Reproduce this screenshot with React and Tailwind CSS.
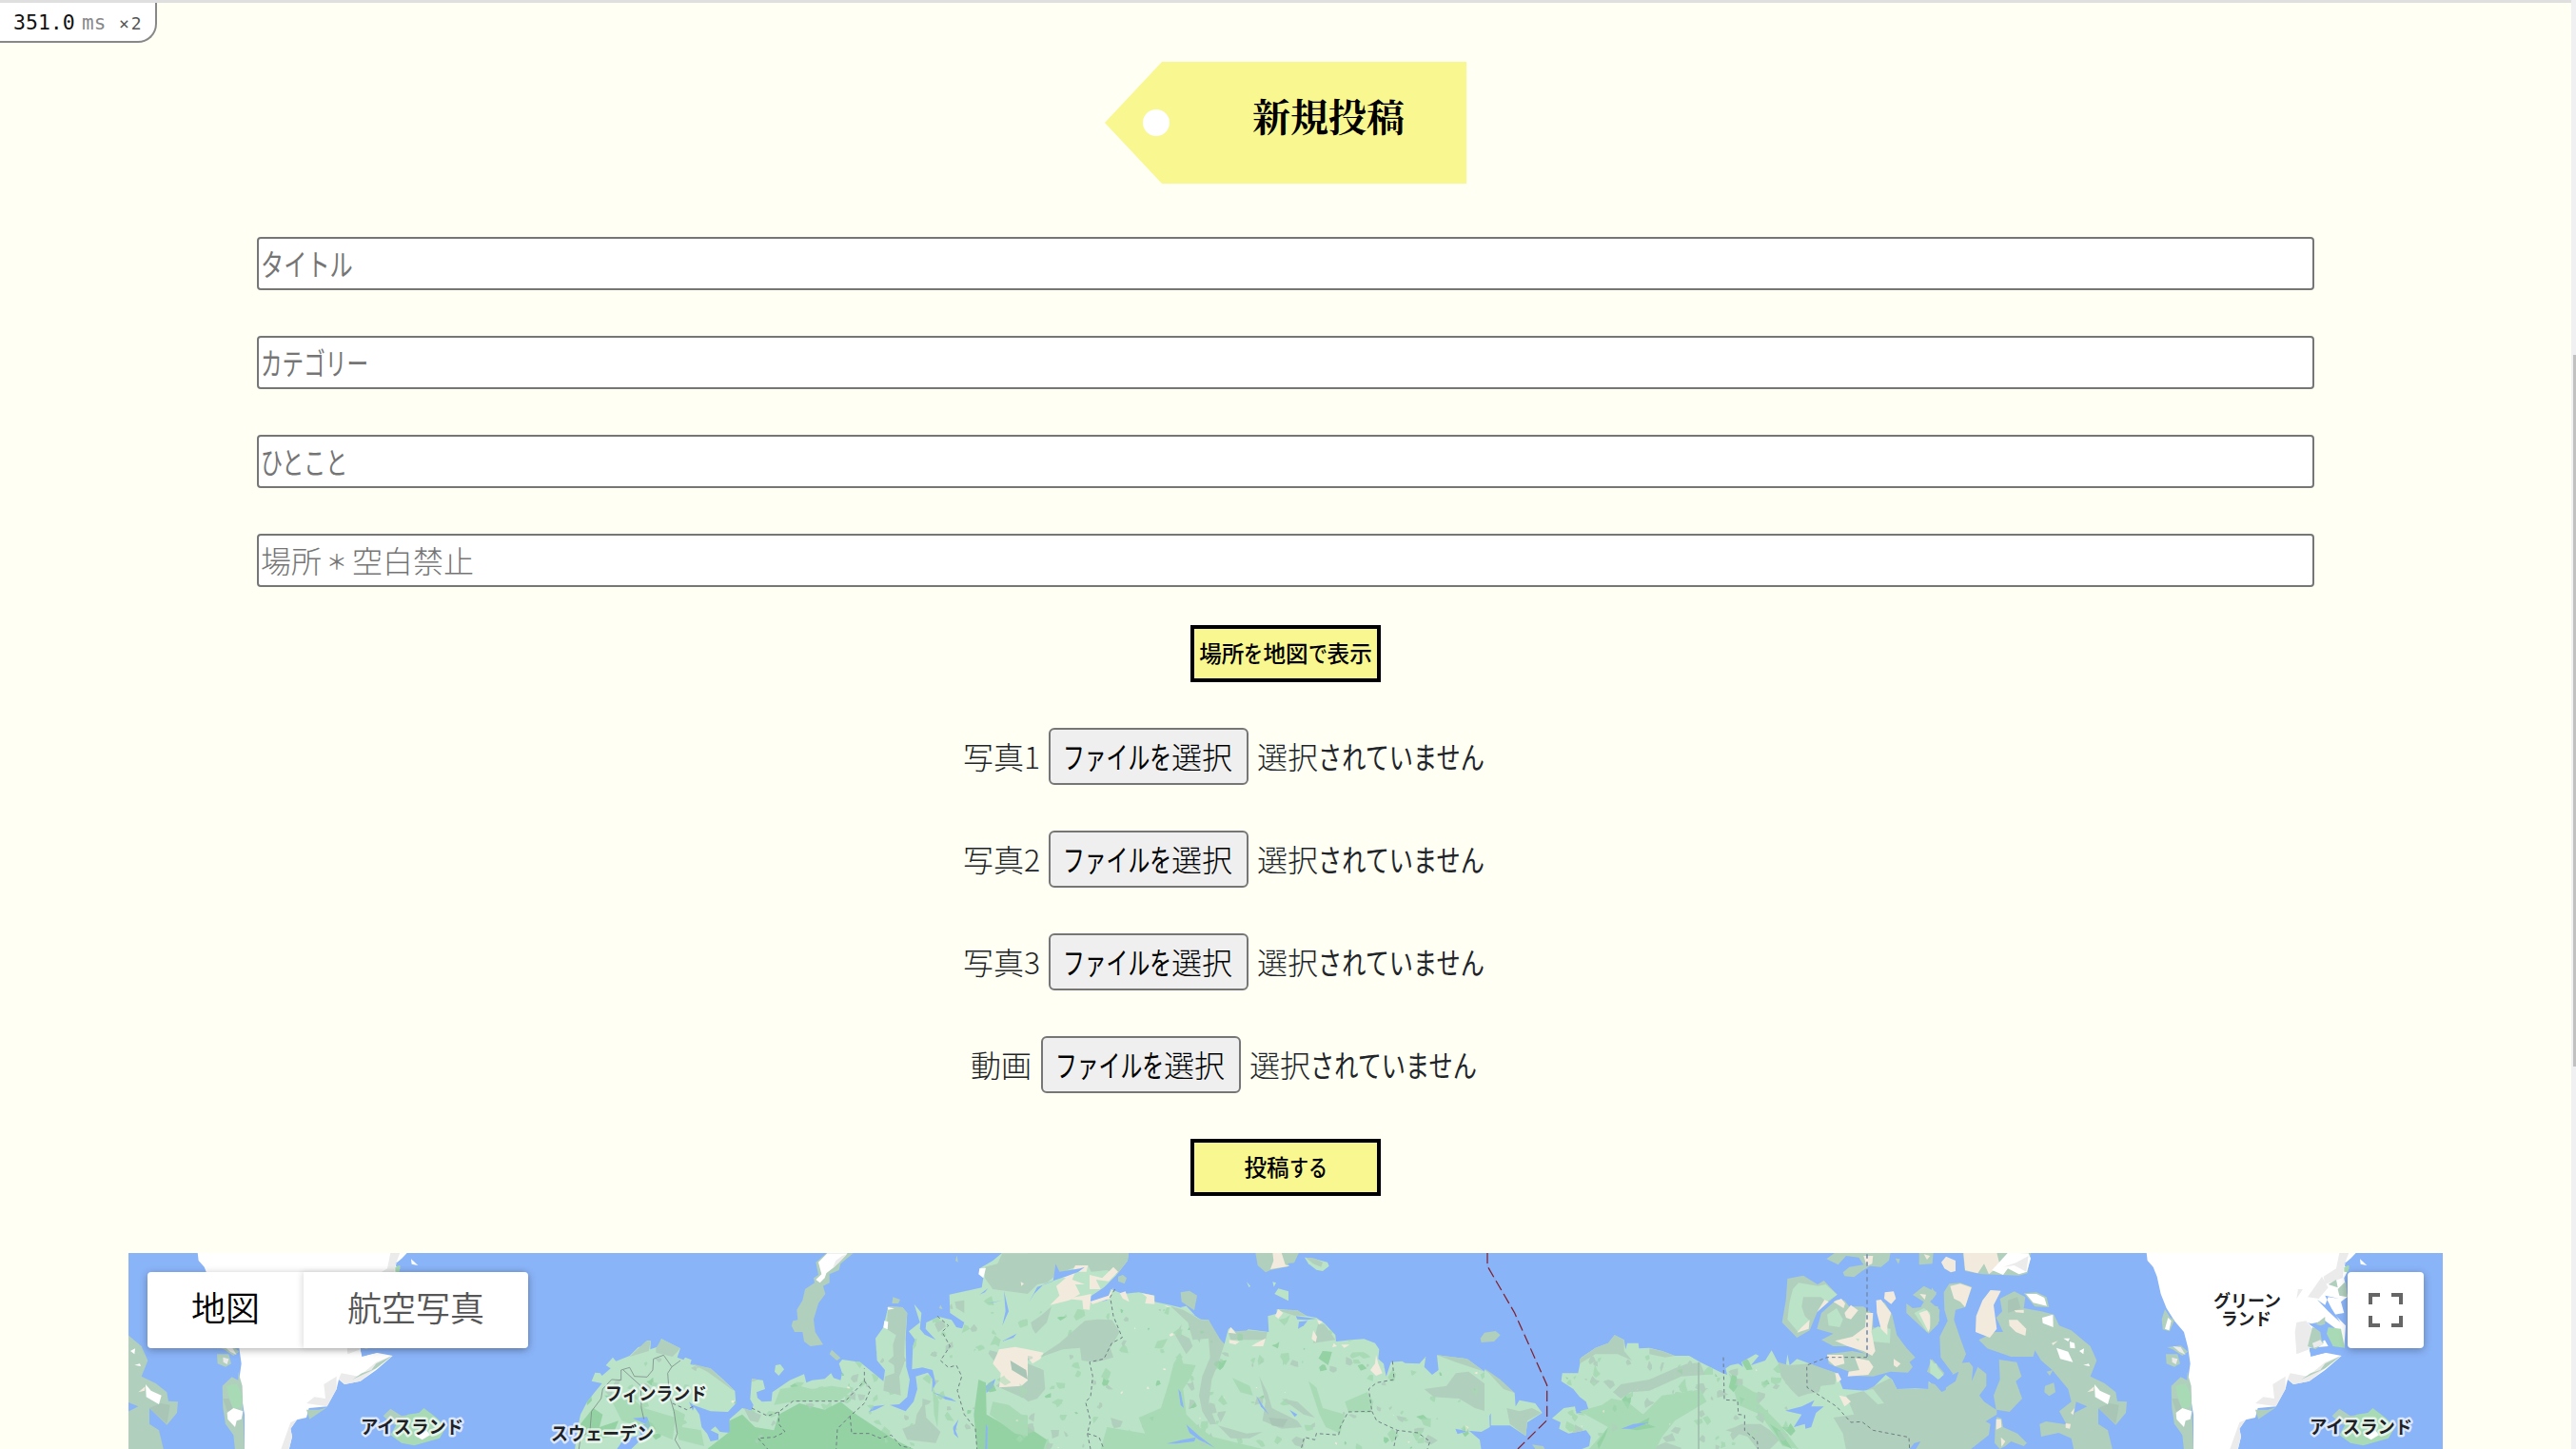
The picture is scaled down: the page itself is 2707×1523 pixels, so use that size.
import React from "react";

const KANA = /[\u3041-\u30ff]/;

// Kana runs are set narrower than kanji; `kana` is the advance of one kana in pixels.
function Text({ children, size, kana, className = "", kanaClass = "" }) {
  const runs = [];
  for (const ch of children) {
    const k = KANA.test(ch);
    const last = runs[runs.length - 1];
    if (ch !== "＊" && last && last.k === k && last.t !== "＊") last.t += ch;
    else runs.push({ k, t: ch });
  }
  return (
    <span className={"flex whitespace-nowrap " + className}>
      {runs.map((r, i) =>
        r.k ? (
          <span key={i} className={"block " + kanaClass} style={{ width: r.t.length * kana }}>
            <span className="block w-max origin-left" style={{ transform: `scaleX(${kana / size})` }}>
              {r.t}
            </span>
          </span>
        ) : (
          <span key={i} className={r.t === "＊" ? "block scale-[0.68] font-normal" : "block"}>{r.t}</span>
        )
      )}
    </span>
  );
}

const C = {
  land: "#bbe3c8",
  gray: "#b1cfbd",
  dark: "#a9c5b5",
  mid: "#a8dab5",
  forest: "#94d2a5",
  tan: "#f2ebdd",
  white: "#ffffff",
  ice: "#ebebec",
  sea: "#8ab4f8",
};

const WEST = [
  ["land", "12,672 22,600 30,560 50,522 75,490 98,462 65,455 76,428 92,430 98,438 125,415 110,405 132,380 142,392 185,375 212,348 240,342 238,328 252,328 250,355 278,345 285,322 345,352 335,380 355,388 360,380 380,388 376,402 440,415 480,450 517,486 520,525 495,552 440,550 385,530 405,560 412,600 430,622 440,645 465,640 465,622 440,610 455,598 470,615 502,618 500,575 540,540 570,548 575,530 565,512 570,448 605,452 612,480 585,490 588,508 602,520 632,518 635,490 690,452 735,433 742,460 760,452 800,448 820,430 828,445 850,452 855,430 845,400 855,387 912,395 985,455 990,420 965,390 960,320 985,285 1000,220 1045,222 1060,240 1055,320 1057,410 1068,450 1060,505 1035,528 1005,530 1055,550 1080,520 1092,480 1087,440 1125,428 1140,450 1138,490 1150,462 1140,420 1108,412 1075,418 1078,345 1085,325 1065,298 1100,270 1082,212 1105,240 1100,290 1115,308 1150,325 1118,290 1120,270 1160,252 1200,262 1215,285 1240,290 1235,330 1240,372 1218,352 1225,312 1240,270 1195,240 1193,182 1295,160 1300,130 1288,100 1330,75 1360,50 1500,50 1500,672"],
  ["forest", "430,669 500,615 500,580 540,560 580,600 640,610 655,560 720,525 800,545 850,520 900,560 960,600 1020,640 1080,669"],
  ["forest", "30,590 70,540 100,560 90,600 150,580 130,630 60,640"],
  ["mid", "130,520 180,500 230,540 330,570 320,640 250,610 160,580"],
  ["mid", "320,540 360,560 350,600 410,610 420,660 340,640"],
  ["mid", "640,530 660,480 720,470 760,480 820,470 890,480 850,515 700,520"],
  ["mid", "1140,470 1160,520 1155,600 1145,560"],
  ["forest", "1270,560 1285,450 1308,460 1310,560 1380,600 1400,580 1500,610 1500,669 1280,669"],
  ["mid", "1320,560 1330,520 1380,530 1420,560 1500,570 1500,640 1400,620"],
  ["gray", "235,330 252,328 245,360 185,378"],
  ["gray", "268,352 285,322 345,352 320,378 268,365"],
  ["gray", "380,400 440,415 517,486 505,480 430,425"],
  ["gray", "995,290 1000,220 1045,222 1060,240 1052,330 1050,400 1035,440 1040,500 985,485 990,440 1020,430 1015,340 1025,310"],
  ["gray", "545,540 600,562 590,585 565,580"],
  ["gray", "1045,605 1085,590 1090,560 1115,520 1120,570 1165,615 1150,650 1060,640"],
  ["gray", "1360,52 1500,52 1500,160 1440,180 1330,165 1305,130 1305,95 1345,85"],
  ["gray", "1210,205 1240,200 1240,240 1215,225"],
  ["gray", "1450,265 1485,248 1500,250 1500,320 1460,300"],
  ["gray", "1340,470 1390,430 1460,390 1500,360 1500,570 1430,510"],
  ["tan", "1330,400 1350,355 1400,347 1480,362 1475,395 1440,395 1455,440 1420,470 1350,475 1355,430"],
  ["dark", "1385,390 1435,420 1440,450 1390,420"],
  ["white", "1288,100 1308,98 1300,130 1285,118"],
  ["white", "998,222 1020,226 1000,230"],
  ["white", "988,265 1000,268 998,292 985,286"],
  ["tan", "1418,142 1428,148 1420,155"],
  ["gray", "805,52 890,52 850,85 845,105 815,118 815,145 795,155 802,180 780,210 765,260 770,300 795,340 755,345 735,330 730,300 705,300 695,280 700,265 715,262 712,230 730,200 738,165 768,145 765,130 780,120 772,80"],
  ["white", "808,52 872,52 830,95 805,115 800,130 785,145 772,135 790,118 780,80"],
  ["ice", "855,60 870,55 845,82 825,98 835,75"],
  ["land", "645,405 660,402 672,418 655,438 642,425"],
  ["gray", "822,356 850,382 838,390 815,370"],
  ["gray", "1015,190 1038,198 1032,210 1012,210"],
  ["gray", "1217,58 1220,80 1212,75"],
  ["gray", "1165,215 1172,228 1160,225"],
  ["sea", "145,669 165,640 220,625 210,600 235,590 195,572 240,568 250,595 215,645 190,669"],
  ["sea", "372,520 390,535 384,548"],
  ["sea", "1310,210 1360,200 1330,208"],
  ["sea", "1365,170 1380,235 1360,280 1370,235"],
  ["sea", "1358,330 1405,305 1395,318"],
  ["sea", "1288,182 1315,162 1305,175"],
  ["sea", "1308,470 1338,448 1330,475 1310,492"],
  ["sea", "1308,590 1313,600 1312,669 1306,669"],
  ["sea", "1140,490 1200,510 1215,520 1180,512"],
  ["sea", "1205,600 1222,575 1212,610 1222,635 1208,622"],
  ["sea", "940,552 950,535 990,530 960,545"],
];

const CENTRE = [
  ["land", "0,50 318,50 315,75 280,120 240,160 195,190 200,210 250,200 262,165 300,180 350,175 400,185 400,205 450,215 490,225 545,260 570,262 600,320 620,338 632,292 640,285 662,305 680,305 695,292 760,300 757,250 785,242 785,228 850,232 880,250 910,255 935,272 970,310 972,330 1020,325 1060,322 1095,335 1108,355 1105,385 1122,400 1130,440 1145,395 1180,392 1190,398 1235,400 1255,377 1250,410 1275,435 1295,420 1290,373 1385,385 1440,425 1502,462 1502,582 1475,580 1470,555 1455,558 1457,600 1430,615 1370,610 1348,605 1355,622 1392,612 1425,640 1430,672 0,672"],
  ["gray", "0,50 318,50 315,75 280,120 250,105 200,110 190,90 150,95 90,120 60,145 30,150 0,180"],
  ["gray", "25,385 100,335 180,265 220,260 265,262 290,300 260,350 270,380 215,395 170,390 165,350 110,355"],
  ["gray", "15,290 10,270 40,250 75,220 60,270 25,305"],
  ["gray", "0,400 50,420 55,480 30,510 0,520"],
  ["gray", "450,218 490,230 545,262 570,262 605,320 620,338 600,400 580,450 570,530 595,590 575,592 550,550 540,500 550,440 575,380 570,320 520,325 505,270"],
  ["gray", "632,300 695,295 755,300 750,325 640,325"],
  ["gray", "785,230 850,232 880,250 840,248"],
  ["gray", "915,275 935,275 970,325 900,335"],
  ["gray", "730,440 755,490 770,540 850,580 865,600 800,605 740,580 750,520"],
  ["gray", "800,510 850,520 905,570 870,560"],
  ["gray", "600,595 690,620 740,615 700,635 640,635"],
  ["gray", "1250,480 1320,470 1350,430 1390,425 1450,470 1500,500 1500,582 1475,580 1460,555 1410,540 1360,510 1280,505"],
  ["gray", "1290,373 1385,385 1440,425 1350,395"],
  ["gray", "465,310 485,275 480,305 510,320 520,345 500,370"],
  ["dark", "760,570 820,575 805,600 770,595"],
  ["mid", "445,460 460,400 480,365 490,400 530,405 510,450 490,480 500,560 540,600 580,630 740,669 230,669 250,600 370,620 350,570 420,540"],
  ["mid", "645,445 700,470 710,500 670,490"],
  ["mid", "885,455 910,475 930,540 1000,560 985,620 940,600 920,560"],
  ["mid", "1000,520 1070,490 1090,520 1080,555 1010,550"],
  ["forest", "0,600 60,640 50,669 0,669"],
  ["tan", "70,215 100,185 90,155 120,130 80,125 140,110 150,90 190,90 185,110 150,110 140,135 180,150 150,150 165,180 130,200"],
  ["tan", "195,120 235,130 270,95 285,110 255,140 215,135 230,165 195,165"],
  ["tan", "120,195 175,185 200,180 195,230 175,228 172,200"],
  ["tan", "195,205 255,185 270,160 258,195 205,212"],
  ["tan", "290,178 308,172 320,205 300,195"],
  ["tan", "360,178 398,185 400,212 370,210 375,190"],
  ["tan", "430,215 452,222 440,222"],
  ["tan", "640,285 657,305 632,302"],
  ["tan", "635,325 668,330 655,340 635,335"],
  ["tan", "720,335 750,320 742,345 705,345"],
  ["tan", "790,228 805,240 790,258 780,250"],
  ["tan", "912,262 930,268 918,277"],
  ["tan", "900,295 912,315 908,332 895,322"],
  ["tan", "965,335 975,345 960,348"],
  ["tan", "988,340 1015,340 998,350"],
  ["tan", "1080,420 1095,400 1098,372 1105,400 1118,430 1098,438"],
  ["tan", "1378,595 1390,600 1382,615"],
  ["tan", "0,355 50,365 40,385 15,400 0,380"],
  ["sea", "88,85 100,110 165,100 180,95 160,110 120,125 90,135 50,150 20,180 5,205 30,158 80,140"],
  ["sea", "845,250 910,258 880,262 850,260"],
  ["sea", "852,290 855,268 882,265 870,280"],
  ["sea", "475,480 482,490 492,540 482,530"],
  ["sea", "500,592 540,628 590,665 540,640 510,618"],
  ["sea", "438,652 490,640 530,632 525,645 470,652"],
  ["sea", "720,500 760,560 735,535"],
  ["sea", "825,545 850,560 842,568"],
  ["gray", "482,175 510,170 534,185 525,232 485,205"],
  ["land", "482,222 500,218 528,248 500,235"],
  ["gray", "285,125 300,120 312,130 305,148 285,140"],
  ["gray", "718,50 855,50 840,82 820,84 825,92 790,100 765,105 750,112 725,90"],
  ["tan", "772,50 800,50 812,88 825,92 765,102 775,75"],
  ["land", "873,65 900,68 945,80 950,92 930,108 910,104 885,85"],
  ["gray", "876,65 905,68 930,80 925,95 900,85"],
  ["land", "778,180 790,163 822,172 822,202"],
  ["land", "772,142 783,145 776,158"],
  ["land", "690,142 702,155 698,160"],
  ["gray", "1427,320 1440,302 1475,297 1490,310 1470,330 1430,333"],
];

const EAST = [
  ["land", "0,418 95,492 98,535 110,515 160,525 182,555 135,585 130,628 80,595 20,595 20,555 0,600"],
  ["gray", "0,415 50,450 95,492 60,480"],
  ["gray", "70,540 110,550 150,540 180,555 135,580 130,628 80,590 75,565"],
  ["land", "300,672 330,660 335,630 320,610 265,620 235,605 240,585 213,572 250,540 285,535 290,557 330,550 320,520 300,505 280,480 242,455 245,430 295,430 305,380 350,350 390,335 410,310 440,325 445,355 450,335 485,335 487,352 520,350 560,360 600,375 645,375 680,395 750,430 765,435 760,415 775,405 800,400 815,410 810,395 855,370 865,375 840,405 885,390 905,358 925,395 950,408 955,370 962,405 985,385 1025,400 1060,415 1110,430 1130,480 1200,485 1245,512 1225,475 1265,435 1285,450 1300,480 1360,478 1400,480 1400,455 1440,490 1455,500 1502,470 1502,672"],
  ["gray", "300,385 350,350 390,335 410,310 440,325 440,360 465,390 420,370 350,370 300,400"],
  ["gray", "520,352 560,360 600,375 570,380 520,370"],
  ["gray", "405,490 430,465 520,450 600,415 640,400 680,397 695,435 620,440 520,485 460,490 430,510"],
  ["gray", "760,610 790,600 810,590 870,590 900,610 930,640 900,669 860,669 830,630"],
  ["gray", "520,669 570,648 620,665 620,669"],
  ["gray", "925,395 960,405 1025,400 1110,430 1105,465 1060,470 1055,490 1020,495 990,505 965,480 935,440"],
  ["gray", "1100,570 1165,560 1140,500 1200,485 1280,445 1300,480 1400,480 1440,490 1502,460 1502,672 1140,672 1130,620"],
  ["mid", "300,550 370,530 400,510 450,520 500,560 560,500 640,490 680,480 700,520 600,580 560,630 540,669 330,669 390,600"],
  ["mid", "770,430 800,460 850,490 875,495 860,520 930,590 990,669 940,660 870,560 800,530"],
  ["forest", "780,435 795,440 798,470 785,490 770,475"],
  ["forest", "355,650 390,600 380,630 360,669"],
  ["forest", "450,605 520,570 515,590 540,600 480,610"],
  ["forest", "900,590 930,610 970,669 940,655"],
  ["sea", "948,548 1000,535 1040,515 1030,535 1070,535 1045,555 1030,600 1012,605 1010,590 975,600 1000,560"],
  ["sea", "430,605 470,590 520,585 465,605"],
  ["sea", "1340,669 1355,650 1375,645 1360,669"],
  ["sea", "1410,540 1425,545 1412,545"],
  ["tan", "1118,500 1140,505 1155,520 1135,535"],
  ["tan", "1105,430 1115,430 1125,450 1112,460"],
  ["land", "1195,485 1225,480 1260,525 1240,528"],
  ["gray", "955,132 1005,122 1050,150 1070,138 1112,182 1050,235 1025,295 985,318 938,270 950,200"],
  ["land", "972,165 990,145 1052,155 1075,150 1112,182 1080,205 1060,190 1005,190 1000,220 1010,250 1025,265 990,302 955,260 962,205"],
  ["tan", "985,302 1000,285 1025,262 1022,290"],
  ["tan", "1048,238 1072,198 1085,205"],
  ["gray", "1048,290 1062,240 1110,198 1135,200 1150,220 1195,220 1225,245 1225,285 1250,290 1235,200 1262,208 1285,245 1300,310 1330,350 1358,380 1340,395 1350,410 1335,428 1280,425 1225,440 1145,438 1150,425 1110,410 1085,400 1080,370 1160,360 1200,368 1150,345 1100,345 1062,325 1100,305"],
  ["land", "1080,245 1110,225 1130,260 1120,285 1085,280"],
  ["land", "1220,295 1240,283 1280,290 1278,335 1220,330"],
  ["tan", "1105,328 1160,315 1200,285 1203,240 1225,240 1220,300 1232,360 1222,375 1195,360 1145,345"],
  ["tan", "1235,200 1250,198 1282,240 1270,280 1270,310 1250,290 1237,240"],
  ["tan", "1262,175 1290,172 1297,195 1282,212 1260,195"],
  ["tan", "1080,372 1130,372 1135,400 1105,408 1085,390"],
  ["tan", "1168,382 1212,390 1226,410 1210,435 1145,440 1148,425 1182,420"],
  ["tan", "1100,205 1125,195 1137,210 1132,225"],
  ["tan", "1135,240 1155,215 1178,232 1155,260 1140,255"],
  ["tan", "1290,385 1312,400 1300,412 1290,405"],
  ["land", "1170,320 1182,322 1178,330"],
  ["gray", "1078,70 1105,50 1280,50 1275,75 1250,95 1215,92 1190,108 1165,127 1135,124 1130,112 1150,95 1195,88 1180,65 1140,60 1115,88"],
  ["tan", "1195,60 1225,60 1222,85 1205,92"],
  ["gray", "1295,68 1310,70 1305,86"],
  ["gray", "1370,50 1415,50 1412,85 1370,88"],
  ["tan", "1385,55 1405,60 1395,72"],
  ["gray", "1350,183 1385,155 1425,175 1405,205 1435,230 1430,275 1400,305 1330,240 1330,210 1350,225 1375,222 1385,205"],
  ["land", "1355,240 1385,225 1415,245 1415,280 1395,300"],
  ["tan", "1370,240 1395,232 1412,262 1400,300 1385,270"],
  ["tan", "1372,180 1392,182 1388,198"],
  ["gray", "1395,425 1410,385 1450,430 1435,448"],
  ["land", "1405,400 1425,400 1435,440 1410,430"],
  ["gray", "150,655 185,660 190,669 160,669"],
];

// North Atlantic side: drawn once at each end, as the world repeats.
const ATLANTIC = [
  ["gray", "-10,460 10,465 42,502 45,475 75,455 85,425 65,435 70,410 92,398 118,395 130,410 126,455 145,410 172,432 172,470 150,500 165,520 203,545 195,500 215,450 212,387 268,395 283,440 265,455 285,510 245,552 205,545 205,560 165,585 138,565 185,590 180,625 120,672 -10,672"],
  ["gray", "38,175 55,148 90,145 127,158 105,222 75,230 70,262 90,320 108,370 92,405 65,430 28,380 25,315 50,265 40,230"],
  ["gray", "205,568 220,573 225,600 270,620 300,650 290,660 250,645 232,660 215,669 198,650 200,600"],
  ["gray", "148,325 200,300 225,300 203,255 222,235 215,195 260,172 295,190 290,225 345,235 385,245 402,280 440,295 500,345 520,390 500,440 545,462 580,490 585,518 615,520 612,555 580,593 525,540 525,590 555,610 570,672 448,672 440,635 400,618 345,630 340,590 360,582 425,592 402,550 440,520 430,480 380,420 345,390 325,358 320,378 250,378 175,352"],
  ["sea", "455,520 490,535 450,555 445,580"],
  ["dark", "525,540 560,525 590,530 580,590"],
  ["dark", "240,200 270,190 280,225 240,240"],
  ["tan", "160,200 185,168 218,170 195,215 205,290 183,318 138,300 140,250"],
  ["tan", "58,155 90,148 125,160 105,222 90,205 70,195"],
  ["tan", "30,80 45,62 75,75 75,108 60,112 40,100"],
  ["gray", "98,50 312,50 302,115 275,122 160,118 105,108"],
  ["tan", "100,50 205,50 215,90 180,118 165,85 145,115 105,105"],
  ["white", "190,105 240,50 305,52 312,68 300,110 275,118 240,100 225,120"],
  ["ice", "225,95 265,82 305,60 298,110 260,90"],
  ["gray", "290,178 330,175 362,190 370,222 325,220"],
  ["white", "297,180 330,180 355,192 363,218 320,208"],
  ["white", "348,255 382,245 383,285 350,272"],
  ["white", "393,350 430,362 445,395 405,385"],
  ["white", "435,330 450,335 452,352 436,350"],
  ["white", "415,320 435,320 430,330"],
  ["white", "478,404 495,400 498,408"],
  ["white", "465,360 480,352 478,370"],
  ["white", "513,465 530,485 563,500 555,528 515,505"],
  ["tan", "490,490 512,472 510,485"],
  ["tan", "243,262 270,262 298,290 295,312 265,300 245,280"],
  ["tan", "260,232 290,230 290,240 265,238"],
  ["tan", "378,335 398,328 382,342"],
  ["tan", "203,575 218,575 220,600 203,608"],
  ["tan", "218,632 232,645 220,662"],
  ["tan", "422,588 438,590 435,605 422,602"],
  ["tan", "438,555 450,540 446,562"],
  ["gray", "357,470 385,460 390,490 370,502 355,490"],
  ["gray", "362,425 382,420 372,438"],
  ["gray", "0,160 15,180 0,200"],
  ["gray", "-5,215 20,220 24,265 5,290 -5,290"],
  ["land", "-5,385 38,435 20,450 -5,430"],
  ["white", "677,50 680,75 698,95 710,125 722,180 740,225 765,265 795,300 808,350 815,400 808,450 815,500 825,560 825,672 965,672 975,630 970,605 990,577 1020,570 1028,540 1085,535 1115,480 1122,450 1140,465 1190,455 1240,420 1292,375 1240,365 1195,378 1190,350 1250,345 1225,300 1190,275 1240,265 1275,290 1300,350 1305,280 1270,245 1300,240 1290,205 1310,190 1300,130 1315,100 1300,90 1338,50"],
  ["ice", "1285,50 1315,50 1300,90 1295,130 1240,150 1235,125 1275,100"],
  ["ice", "1185,190 1230,125 1250,160 1220,195"],
  ["ice", "1150,195 1155,165 1170,165"],
  ["ice", "1145,300 1150,270 1180,265 1200,290 1190,355 1150,370"],
  ["ice", "1122,448 1130,430 1185,440 1240,395 1290,375 1240,415 1190,455 1140,465"],
  ["ice", "1020,525 1045,505 1080,510 1075,465 1115,440 1115,480 1085,535"],
  ["ice", "940,669 970,585 990,577 970,605 975,630 965,669"],
  ["gray", "1165,450 1240,415 1290,375 1240,400 1225,420 1195,430"],
  ["gray", "1020,545 1060,545 1085,538 1030,575"],
  ["gray", "1250,150 1275,135 1280,160"],
  ["gray", "1280,165 1305,140 1310,190 1285,185"],
  ["mid", "1300,95 1318,88 1312,112 1300,110"],
  ["gray", "1210,275 1240,252 1240,275 1225,280"],
  ["mid", "1250,285 1290,290 1302,350 1265,345 1245,305"],
  ["gray", "1185,345 1200,285 1230,295 1235,335 1210,355"],
  ["ice", "1200,335 1225,325 1235,340 1205,350"],
  ["sea", "1215,198 1240,215 1250,190 1285,195 1240,185 1260,225 1288,270 1250,235"],
  ["sea", "1185,270 1225,285 1250,320 1230,330 1225,300"],
  ["sea", "1300,85 1320,70 1322,105 1312,85"],
  ["sea", "1190,358 1240,350 1245,365 1200,375"],
  ["white", "1350,70 1372,90 1352,86"],
  ["gray", "755,470 785,442 805,452 805,425 818,470 820,545 825,672 795,672 790,625 765,590 757,540"],
  ["mid", "768,470 800,462 818,500 815,535 790,545 775,500"],
  ["dark", "757,510 775,510 790,545 770,550"],
  ["white", "770,555 790,540 820,550 815,575 800,580 795,600 772,575"],
  ["gray", "738,370 775,370 783,400 765,410 740,400"],
  ["ice", "757,380 775,385 770,402 758,395"],
  ["gray", "742,348 785,343 808,362 790,375 760,355"],
  ["ice", "760,345 785,348 800,372 780,362"],
  ["gray", "725,260 735,228 752,255 765,262 750,298 728,292"],
  ["white", "735,290 745,255 755,265 748,295"],
  ["gray", "1262,565 1285,542 1320,565 1350,560 1330,600 1290,590"],
  ["mid", "1285,625 1305,590 1340,560 1375,555 1390,540 1430,570 1460,600 1440,635 1360,658 1320,650"],
  ["white", "1360,625 1400,612 1410,625 1385,640"],
];

const shapes = (list) => list.map(([k, p], i) => <polygon key={i} points={p} fill={C[k]} />);

// Small deterministic vegetation patches scattered over land.
function patches(seed, n, x0, x1, y0, y1) {
  let s = seed;
  const r = () => ((s = (s * 16807) % 2147483647) / 2147483647);
  const kinds = ["mid", "mid", "gray", "mid", "gray", "forest"];
  return Array.from({ length: n }, () => {
    const x = x0 + r() * (x1 - x0);
    const y = y0 + r() * (y1 - y0);
    const w = 5 + r() * 17;
    const k = r() < 0.07 ? "tan" : kinds[Math.floor(r() * kinds.length)];
    const q = k === "tan" ? 0.3 : 1;
    const pts = [0, 1, 2, 3, 4].map((j) => {
      const a = (j / 5) * 6.283 + r();
      const d = w * q * (0.3 + r());
      return `${(x + Math.cos(a) * d).toFixed(0)},${(y + Math.sin(a) * d).toFixed(0)}`;
    });
    return [k, pts.join(" ")];
  });
}

function Region({ id, list, x, scatter }) {
  return (
    <g transform={`translate(${x} 1300) scale(0.33333)`}>
      <clipPath id={id}>
        {list.filter(([k, p]) => k === "land" && p.length > 300).map(([, p], i) => (
          <polygon key={i} points={p} />
        ))}
      </clipPath>
      {shapes(list.slice(0, 1))}
      <g clipPath={`url(#${id})`}>{shapes(scatter)}</g>
      {shapes(list.slice(1))}
      <g clipPath={`url(#${id})`} opacity="0.55">{shapes(scatter.slice(0, 70))}</g>
    </g>
  );
}

function Label({ x, y, w, size = 19, children }) {
  return (
    <text
      x={x}
      y={y}
      textLength={w}
      lengthAdjust="spacingAndGlyphs"
      fontSize={size}
      fontWeight="700"
      fill="#202124"
      stroke="#ffffff"
      strokeOpacity="0.7"
      strokeWidth="5"
      strokeLinejoin="round"
      style={{ paintOrder: "stroke" }}
    >
      {children}
    </text>
  );
}

function WorldMap() {
  const dash = { fill: "none", stroke: "#65707a", strokeWidth: 2.6, strokeDasharray: "11 9" };
  const solid = { fill: "none", stroke: "#7b8a86", strokeWidth: 2.4 };
  return (
    <svg className="block h-full w-full" viewBox="135 1317 2432 206" preserveAspectRatio="none">
      <rect x="135" y="1317" width="2432" height="206" fill={C.sea} />
      <Region id="landWest" list={WEST} x={600} scatter={patches(71, 190, 20, 1440, 200, 669)} />
      <Region id="landCentre" list={CENTRE} x={1080} scatter={patches(37, 210, 0, 1500, 230, 669)} />
      <g transform="translate(1560 1300) scale(0.33333)">{shapes(EAST.slice(0, 3))}</g>
      <Region id="landEast" list={EAST.slice(3)} x={1560} scatter={patches(19, 110, 240, 960, 380, 669)} />
      <g transform="translate(2030 1300) scale(0.33333)">{shapes(ATLANTIC)}</g>
      <g transform="translate(-18 1300) scale(0.33333)">{shapes(ATLANTIC.filter(([, p]) => parseInt(p, 10) > 400 || p.startsWith("148,325")))}</g>

      <g transform="translate(600 1300) scale(0.33333)">
        <polyline {...solid} points="25,669 30,635 60,610 65,550 95,510 100,480 128,450 158,452 158,420 185,412 200,440 240,442 258,420 260,385 292,373 318,410 345,390" />
        <polyline {...solid} points="165,420 220,470 222,540 230,575" />
        <polyline {...solid} points="318,410 305,430 310,500 325,550 335,620 328,640 345,669" />
        <polyline {...dash} points="320,525 365,545 385,535" />
        <polyline {...dash} points="570,540 620,565 655,552 700,518 865,518 925,455 925,415" />
        <polyline {...dash} points="655,552 655,590 675,615 640,632 590,635 620,669" />
        <polyline {...dash} points="925,455 945,480 925,525 880,565 840,605 836,669" />
        <polyline {...dash} points="880,565 885,620 940,620 975,635 1010,625 1040,660 1070,665" />
        <polyline {...dash} points="1155,250 1190,280 1170,300 1195,345 1165,390 1190,412 1215,405 1232,440 1218,485 1240,560 1275,605 1280,669" />
      </g>
      <g transform="translate(1080 1300) scale(0.33333)">
        <polyline {...dash} points="275,165 260,190 270,250 298,318 265,335 240,385 195,395 205,440 198,505 182,520 198,580 188,620 198,669" />
        <polyline {...dash} points="188,620 225,632 240,669" />
        <polyline {...dash} points="1150,392 1155,450 1100,460 1075,480 1085,550 1010,552 985,600 980,625 910,620 905,640 872,632 862,669" />
        <polyline {...dash} points="1085,550 1100,580 1165,610 1230,618 1268,645 1260,669" />
        <polyline {...dash} points="1165,610 1153,669" />
      </g>
      <g transform="translate(1560 1300) scale(0.33333)">
        <line x1="675" y1="395" x2="675" y2="669" stroke="#9fbfad" strokeWidth="5" />
        <polyline {...dash} points="753,380 756,514 798,516 800,560 820,562 820,610 860,645 862,669" />
        <polyline {...dash} strokeWidth="5" stroke="#7890b4" strokeDasharray="13 11" points="1206,55 1206,378" />
        <polyline {...dash} points="1206,380 1080,380 1016,405 1017,475 1110,535 1155,585 1190,583 1225,610 1338,632 1340,669" />
        <polyline fill="none" stroke="#8fa3dc" strokeWidth="5" points="9,50 9,92 95,240 197,468 197,578 105,669" opacity="0.5" />
        <polyline fill="none" stroke="#7d1f2c" strokeWidth="3.6" strokeDasharray="34 14" points="9,50 9,92 95,240 197,468 197,578 105,669" />
      </g>

      <g fontFamily="'Noto Sans CJK JP', sans-serif">
        <Label x={379} y={1507} w={108}>アイスランド</Label>
        <Label x={2427} y={1507} w={108}>アイスランド</Label>
        <Label x={636} y={1472} w={107}>フィンランド</Label>
        <Label x={579} y={1514} w={108}>スウェーデン</Label>
        <Label x={2326} y={1374} w={71} size={18}>グリーン</Label>
        <Label x={2334} y={1393} w={53} size={18}>ランド</Label>
      </g>
    </svg>
  );
}

function Field({ text, kana }) {
  return (
    <div className="flex h-14 items-center rounded-[4px] border-2 border-[#767676] bg-white pb-[3px] pl-0.5 text-[32px] leading-none font-light text-[#757575]">
      <Text size={32} kana={kana} kanaClass="font-normal">{text}</Text>
    </div>
  );
}

function SubmitButton({ children, kana }) {
  return (
    <button className="mx-auto flex h-[60px] w-[200px] items-center justify-center border-4 border-black bg-[#f9f78f] text-[23.6px] leading-none font-medium text-black">
      <Text size={23.6} kana={kana}>{children}</Text>
    </button>
  );
}

function FileRow({ label, width }) {
  return (
    <div className={"mx-auto flex h-[60px] items-center text-[32px] leading-none font-light text-[#212529] " + width}>
      <span className="-ml-0.5 mr-auto pb-0.5 whitespace-nowrap">{label}</span>
      <div className="flex w-[586px] items-center">
        <button className="flex h-[60px] w-[210px] shrink-0 items-center justify-center rounded-md border-2 border-[#767676] bg-[#efefef] pr-0.5 pb-0.5 font-light text-black">
          <Text size={32} kana={22.8} kanaClass="font-normal">ファイルを選択</Text>
        </button>
        <Text size={32} kana={25.2} kanaClass="font-normal" className="ml-[9px] pb-0.5">選択されていません</Text>
      </div>
    </div>
  );
}

export default function App() {
  return (
    <div className="flex h-[1523px] w-[2707px] overflow-hidden bg-[#fffff3] font-['Noto_Sans_CJK_JP',sans-serif]">
      <main className="relative flex w-[2702px] flex-col border-t-[3px] border-[#dfdfdf]">
        <div className="absolute top-0 left-0 flex h-[42px] w-[165px] items-baseline rounded-br-[20px] border-r-2 border-b-2 border-[#888] bg-white pt-[7px] pl-3.5 font-['DejaVu_Sans_Mono',monospace] leading-[28px]">
          <span className="w-[72px] text-[21.5px] text-[#111]">351.0</span>
          <span className="w-[39px] text-[21px] text-[#888]">ms</span>
          <span className="text-[18px] tracking-[2px] text-[#555]">×2</span>
        </div>

        <div className="mt-[62px] ml-[1161px] flex h-32 w-[380px] items-center bg-[#f9f78f] [clip-path:polygon(60px_0,100%_0,100%_100%,60px_100%,0_50%)]">
          <span className="ml-10 size-7 rounded-full bg-white" />
          <h1 className="-mt-4 ml-[87px] font-['Noto_Serif_CJK_JP','Noto_Sans_CJK_JP',serif] text-[40px] leading-none font-bold text-black">
            新規投稿
          </h1>
        </div>

        <form className="flex flex-col" onSubmit={(e) => e.preventDefault()}>
          <div className="mx-[270px] mt-14 flex flex-col gap-12">
            <Field text="タイトル" kana={24.2} />
            <Field text="カテゴリー" kana={22.6} />
            <Field text="ひとこと" kana={23} />
            <Field text="場所＊空白禁止" kana={32} />
          </div>
          <div className="mt-10 flex flex-col gap-12">
            <SubmitButton kana={20}>場所を地図で表示</SubmitButton>
            <FileRow label="写真1" width="w-[674px]" />
            <FileRow label="写真2" width="w-[674px]" />
            <FileRow label="写真3" width="w-[674px]" />
            <FileRow label="動画" width="w-[658px]" />
            <SubmitButton kana={20}>投稿する</SubmitButton>
          </div>
        </form>

        <section className="relative mt-[60px] ml-[135px] h-[206px] w-[2432px] overflow-hidden">
          <WorldMap />
          <div className="absolute inset-x-5 top-5 flex h-20 justify-between leading-none">
            <div className="flex rounded-[4px] text-[36px] shadow-[0_2px_8px_rgba(0,0,0,0.3)]">
              <button className="w-[164px] rounded-l-[4px] bg-white pb-2 font-[350] text-black">地図</button>
              <button className="w-[236px] rounded-r-[4px] bg-white pb-2 font-[350] text-[#565656] shadow-[-2px_0_6px_rgba(0,0,0,0.12)]">航空写真</button>
            </div>
            <button className="flex w-20 items-center justify-center rounded-[4px] bg-white shadow-[0_2px_8px_rgba(0,0,0,0.3)]">
              <svg className="size-9" viewBox="0 0 18 18" fill="#666">
                <path d="M0 0v6h2V2h4V0H0zm16 0h-4v2h4v4h2V0h-2zm0 16h-4v2h6v-6h-2v4zM2 12H0v6h6v-2H2v-4z" />
              </svg>
            </button>
          </div>
        </section>
      </main>
      <aside className="w-[5px] bg-[#f0f0f3] pt-[373px]">
        <div className="ml-0.5 h-[748px] bg-[#c1c1c1]" />
      </aside>
    </div>
  );
}
